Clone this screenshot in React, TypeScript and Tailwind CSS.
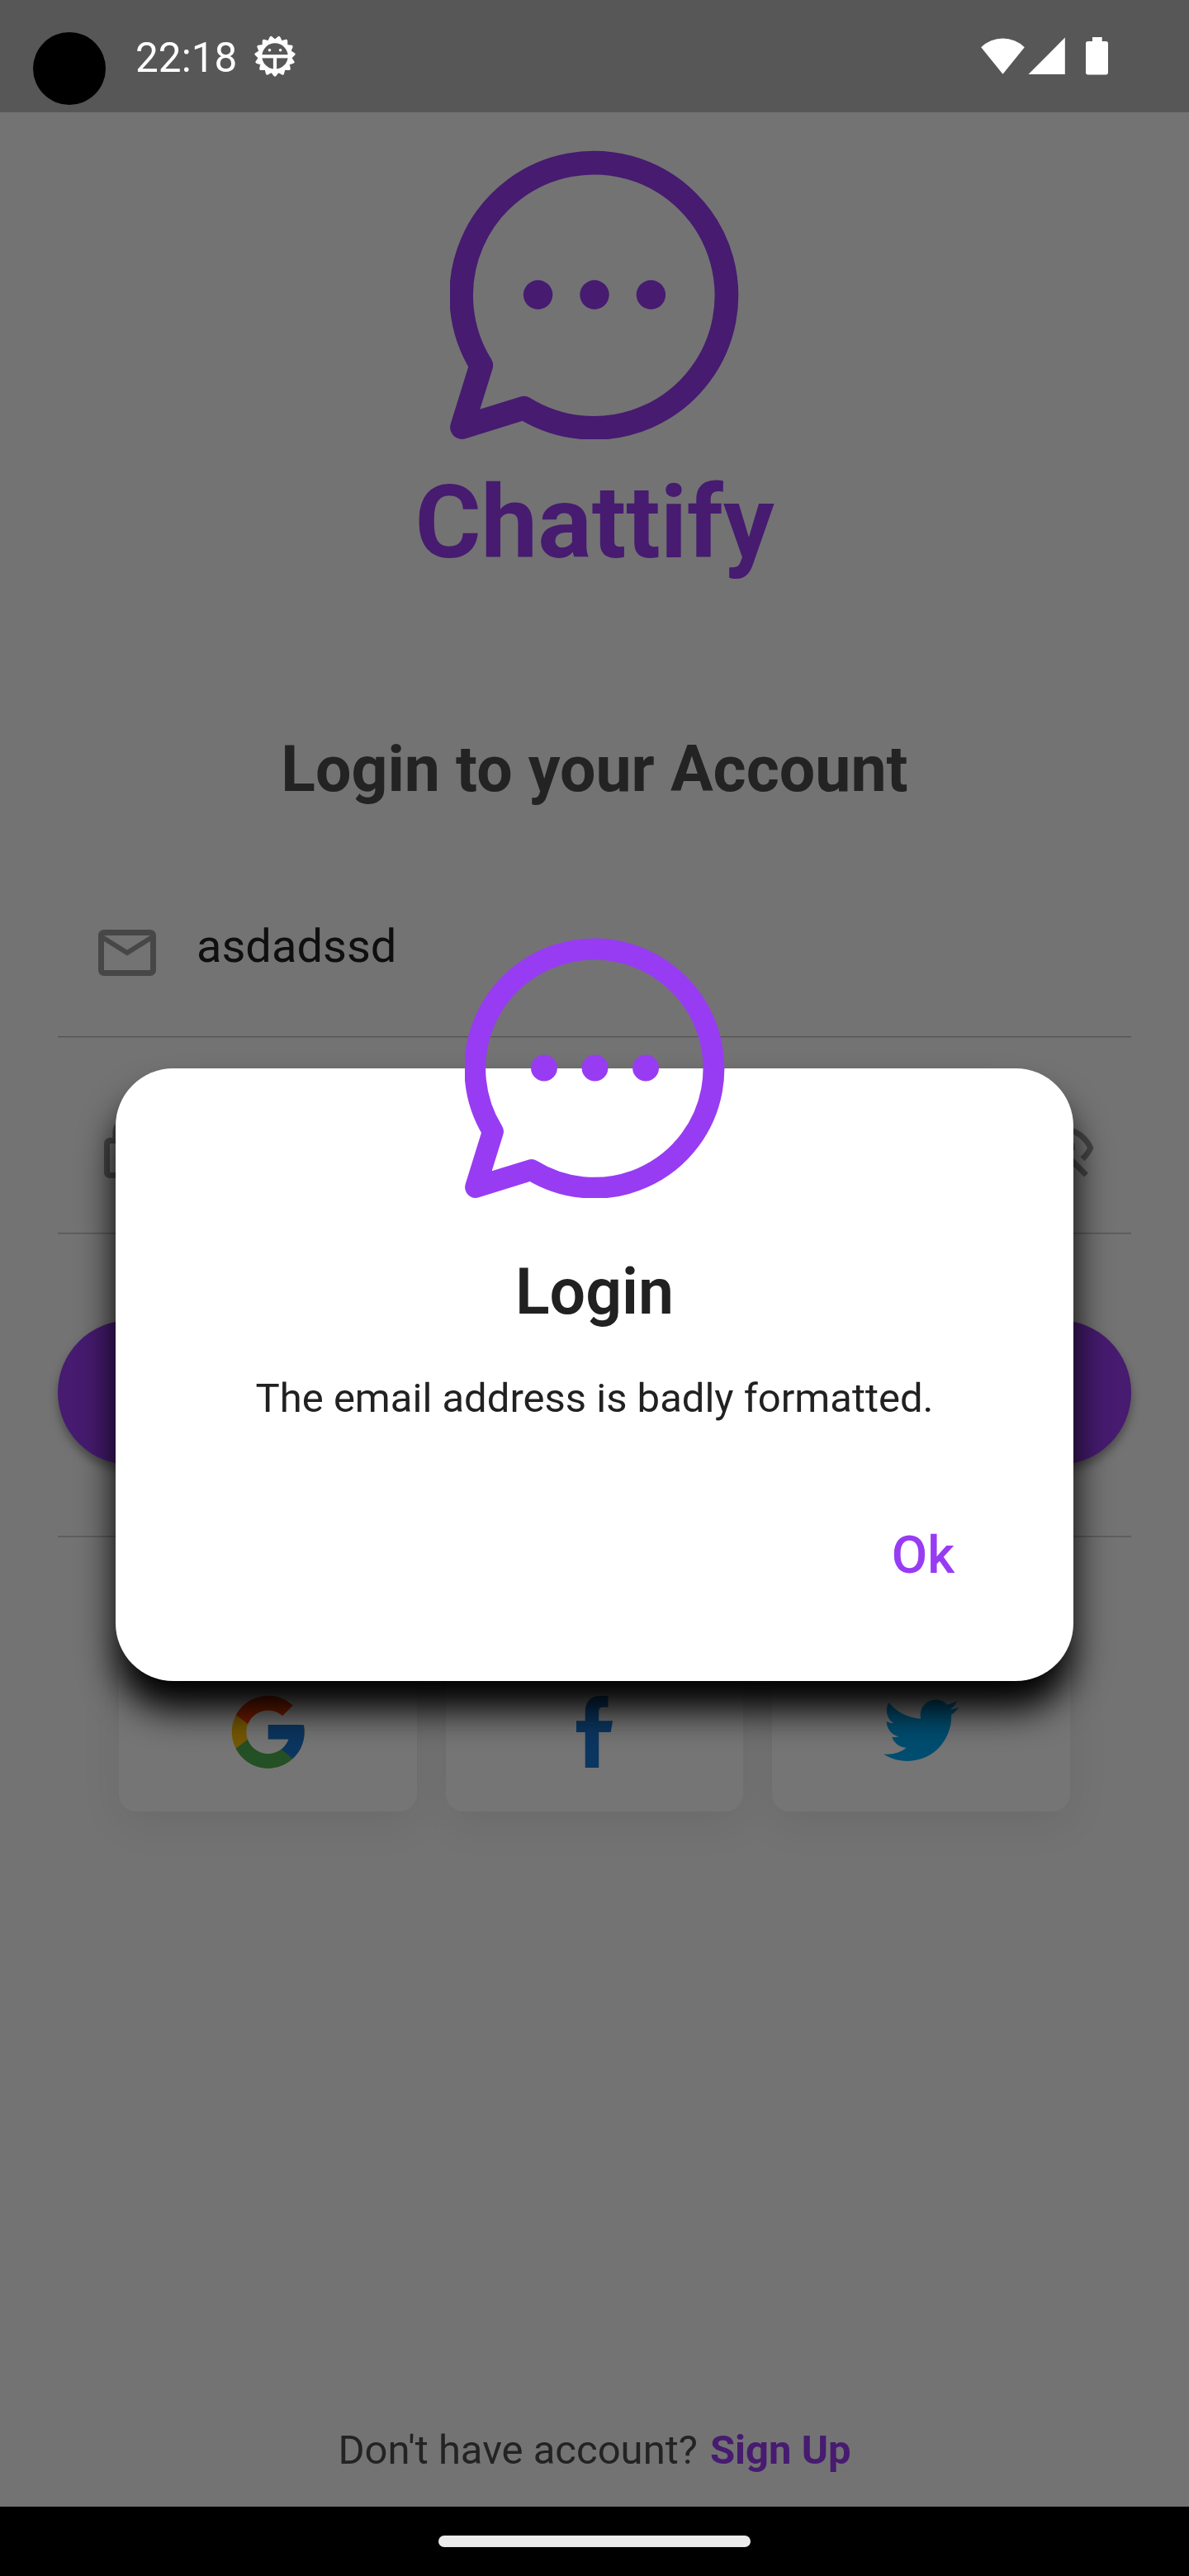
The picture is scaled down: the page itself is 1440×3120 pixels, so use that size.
import type { ReactNode } from "react";
import { FaTwitter } from "react-icons/fa";
import { FcGoogle } from "react-icons/fc";

function ChatLogo({ className }: { className: string }) {
  return (
    <svg viewBox="0 0 350 350" className={className} aria-hidden="true">
      <path
        d="M14.5 335.5 L37.8 260.5 A160.65 160.65 0 1 1 89.5 312.2 Z"
        fill="none"
        stroke="currentColor"
        strokeWidth="28.7"
        strokeLinejoin="round"
      />
      <circle cx="106.6" cy="175" r="17.7" fill="currentColor" />
      <circle cx="175" cy="175" r="17.7" fill="currentColor" />
      <circle cx="243.4" cy="175" r="17.7" fill="currentColor" />
    </svg>
  );
}

// Cog outline with alternating tooth and root points.
const cogPoints = Array.from({ length: 30 }, (_, i) => {
  const r = i % 2 === 0 ? 23 : 18.5;
  const a = Math.PI / 2 + (i * Math.PI) / 15;
  return `${(25 + r * Math.cos(a)).toFixed(2)},${(25 + r * Math.sin(a)).toFixed(2)}`;
}).join(" ");

function DebugIcon() {
  return (
    <svg viewBox="0 0 50 50" className="mt-[43px] ml-[21px] size-[50px]" aria-hidden="true">
      <mask id="cog-hole">
        <rect width="50" height="50" fill="white" />
        <circle cx="25" cy="25" r="15.7" fill="black" />
      </mask>
      <polygon points={cogPoints} fill="white" stroke="white" strokeWidth="3.4" strokeLinejoin="round" mask="url(#cog-hole)" />
      <rect x="8" y="23.2" width="34" height="4.2" fill="white" />
      <rect x="22.9" y="25" width="4.2" height="17" fill="white" />
      <circle cx="18.5" cy="17.8" r="1.8" fill="white" />
      <circle cx="31.6" cy="17.8" r="1.8" fill="white" />
    </svg>
  );
}

function StatusBar() {
  return (
    <div className="absolute inset-x-0 top-0 flex h-[136px] items-start text-white">
      <div className="mt-[39px] ml-10 size-[88px] shrink-0 rounded-full bg-black" />
      <span className="mt-[41px] ml-[36px] text-[49.5px] leading-[58px]">22:18</span>
      <DebugIcon />
      <svg viewBox="0 0 156 46" className="mt-[45px] mr-[97px] ml-auto h-[46px] w-[156px] fill-white" aria-hidden="true">
        <path d="M27.5 44.7 L1.2 12.2 A37.5 37.5 0 0 1 53.8 12.2 Z" />
        <path d="M58.5 45 L102.8 0.5 V45 Z" />
        <path d="M136 0h11.7v5h4.6a2.7 2.7 0 0 1 2.7 2.7v35.1a2.7 2.7 0 0 1-2.7 2.7h-21.6a2.7 2.7 0 0 1-2.7-2.7V7.7A2.7 2.7 0 0 1 130.7 5h5.3z" />
      </svg>
    </div>
  );
}

function MaterialIcon({ d }: { d: string }) {
  return (
    <svg viewBox="0 0 24 24" className="size-[84px] shrink-0 fill-[#9c9c9c]" aria-hidden="true">
      <path d={d} />
    </svg>
  );
}

const mailPath =
  "M22 6c0-1.1-.9-2-2-2H4c-1.1 0-2 .9-2 2v12c0 1.1.9 2 2 2h16c1.1 0 2-.9 2-2V6zm-2 0-8 5-8-5h16zm0 12H4V8l8 5 8-5v10z";
const lockPath =
  "M18 8h-1V6c0-2.76-2.24-5-5-5S7 3.24 7 6v2H6c-1.1 0-2 .9-2 2v10c0 1.1.9 2 2 2h12c1.1 0 2-.9 2-2V10c0-1.1-.9-2-2-2zM9 6c0-1.66 1.34-3 3-3s3 1.34 3 3v2H9V6zm9 14H6V10h12v10z";
const eyeOffPath =
  "M12 6c3.79 0 7.17 2.13 8.82 5.5-.59 1.22-1.42 2.27-2.41 3.12l1.41 1.41c1.39-1.23 2.49-2.77 3.18-4.53C21.27 7.11 17 4 12 4c-1.27 0-2.49.2-3.64.57l1.65 1.65C10.66 6.09 11.32 6 12 6zm-1.07 1.14L13 9.21c.57.25 1.03.71 1.28 1.28l2.07 2.07c.08-.34.14-.7.14-1.07C16.5 9.01 14.48 7 12 7c-.37 0-.72.05-1.07.14zM2.01 3.87l2.68 2.68C3.06 7.83 1.77 9.53 1 11.5 2.73 15.89 7 19 12 19c1.52 0 2.98-.29 4.32-.82l3.42 3.42 1.41-1.41L3.42 2.45 2.01 3.87zm7.5 7.5 2.61 2.61c-.04.01-.08.02-.12.02-1.38 0-2.5-1.12-2.5-2.5 0-.05.01-.08.01-.13zm-3.4-3.4 1.75 1.75c-.23.55-.36 1.15-.36 1.78 0 2.48 2.02 4.5 4.5 4.5.63 0 1.23-.13 1.77-.36l.98.98c-.88.24-1.8.38-2.75.38-3.79 0-7.17-2.13-8.82-5.5.7-1.43 1.72-2.61 2.93-3.53z";

function Field({ icon, children }: { icon: string; children?: ReactNode }) {
  return (
    <div className="flex h-[238px] items-start gap-[42px] border-b border-[#bababa] px-[42px] pt-[94px] shadow-[0_1px_0_#e0e0e0]">
      <MaterialIcon d={icon} />
      {children}
    </div>
  );
}

function SocialCard({ children }: { children: ReactNode }) {
  return (
    <div className="flex h-[192.5px] flex-1 items-center justify-center rounded-[21px] bg-white shadow-[0_14px_50px_rgba(0,0,0,0.08)]">
      {children}
    </div>
  );
}

function LoginPage() {
  return (
    <div className="flex h-[2900px] flex-col items-center px-[70px] pt-[46px]">
      <ChatLogo className="size-[350px] shrink-0 text-[#983cf3]" />
      <h1 className="mt-[29px] text-[122.5px] leading-[144px] font-bold text-[#983cf3]">Chattify</h1>
      <h2 className="mt-[182px] text-[77px] leading-[90px] font-bold text-[#4e4e4e]">Login to your Account</h2>
      <div className="mt-[41px] w-full">
        <Field icon={mailPath}>
          <span className="mt-px text-[56px] leading-[66px] text-[#212121]">asdadssd</span>
        </Field>
        <Field icon={lockPath}>
          <div className="ml-auto flex">
            <MaterialIcon d={eyeOffPath} />
          </div>
        </Field>
      </div>
      <div className="mt-[105px] h-[175px] w-full shrink-0 rounded-full bg-[#983cf3] shadow-[0_7px_12px_rgba(0,0,0,0.35)]" />
      <div className="mt-[86px] h-[2px] w-full shrink-0 bg-[#cccccc]" />
      <div className="mt-[139px] flex w-[1152px] gap-[35px]">
        <SocialCard>
          <FcGoogle className="size-[105.5px]" />
        </SocialCard>
        <SocialCard>
          <svg viewBox="0 0 44 87.5" className="h-[87.5px] w-[44px] fill-[#1976d2]" aria-hidden="true">
            <path d="M10.7 87.5V44H0V30.3h10.7V19.5C10.7 6.5 18 0 28.5 0h10v13.7h-6c-4.2 0-5.3 2-5.3 5.6v11H44L41.7 44H27.2v43.5z" />
          </svg>
        </SocialCard>
        <SocialCard>
          <FaTwitter className="relative top-[-1.5px] size-[91.5px] text-[#03a9f4]" />
        </SocialCard>
      </div>
      <p className="mt-auto mb-[39px] flex gap-[15px] text-[49px] leading-[58px] text-[#4e4e4e]">
        Don't have account? <span className="font-bold text-[#983cf3]">Sign Up</span>
      </p>
    </div>
  );
}

function AlertDialog() {
  return (
    <div className="absolute inset-0 bg-black/54 px-[140px] pt-[1293.5px]">
      <div
        role="dialog"
        className="relative flex h-[742px] flex-col items-center rounded-[70px] bg-white pt-[226px] text-[#212121] shadow-[0_35px_44px_#000]"
      >
        <ChatLogo className="absolute top-[-157.5px] left-[422.5px] size-[315px] text-[#983cf3]" />
        <h3 className="text-[77px] leading-[90px] font-semibold">Login</h3>
        <p className="mt-[55.5px] text-[49px] leading-[58px]">The email address is badly formatted.</p>
        <button className="mt-[124px] mr-[144px] self-end text-[63px] leading-[74px] font-medium text-[#983cf3]">Ok</button>
      </div>
    </div>
  );
}

export default function App() {
  return (
    <div className="relative h-[3120px] w-[1440px] overflow-hidden bg-[#fafafa] font-[Roboto,sans-serif]">
      <div className="h-[136px] bg-[#bdbdbd]" />
      <LoginPage />
      <AlertDialog />
      <StatusBar />
      <div className="absolute inset-x-0 bottom-0 flex h-[84px] justify-center bg-black pt-[35px]">
        <div className="h-[14px] w-[378px] rounded-full bg-[#ebebeb]" />
      </div>
    </div>
  );
}
